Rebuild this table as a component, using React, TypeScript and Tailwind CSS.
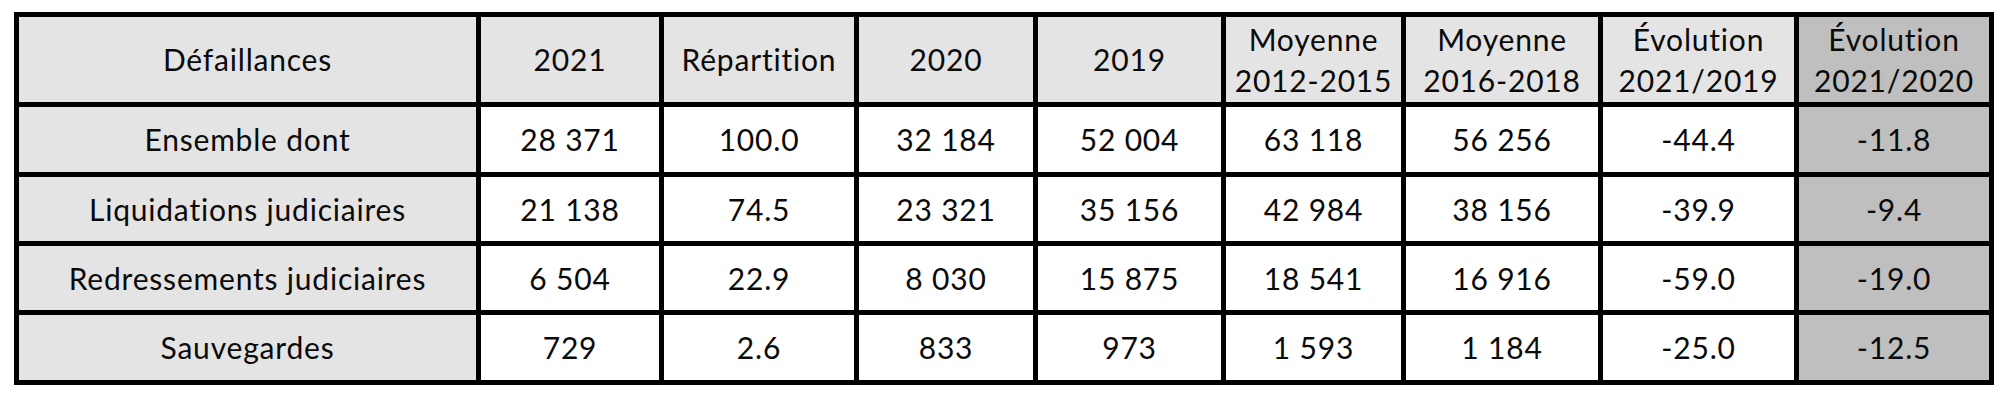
import React from 'react';

interface Row {
  label: string;
  values: string[];
  evolution: string;
}

const headers = [
  'Défaillances',
  '2021',
  'Répartition',
  '2020',
  '2019',
  'Moyenne\n2012-2015',
  'Moyenne\n2016-2018',
  'Évolution\n2021/2019',
];

const rows: Row[] = [
  {
    label: 'Ensemble dont',
    values: ['28 371', '100.0', '32 184', '52 004', '63 118', '56 256', '-44.4'],
    evolution: '-11.8',
  },
  {
    label: 'Liquidations judiciaires',
    values: ['21 138', '74.5', '23 321', '35 156', '42 984', '38 156', '-39.9'],
    evolution: '-9.4',
  },
  {
    label: 'Redressements judiciaires',
    values: ['6 504', '22.9', '8 030', '15 875', '18 541', '16 916', '-59.0'],
    evolution: '-19.0',
  },
  {
    label: 'Sauvegardes',
    values: ['729', '2.6', '833', '973', '1 593', '1 184', '-25.0'],
    evolution: '-12.5',
  },
];

function Cell({ children, tone }: { children: React.ReactNode; tone: 'light' | 'white' | 'dark' }) {
  const bg =
    tone === 'light' ? 'bg-[#e4e4e4]' : tone === 'dark' ? 'bg-[#bfbfbf]' : 'bg-white';
  return (
    <div
      className={`${bg} flex items-center justify-center text-center whitespace-pre-line leading-[41px]`}
    >
      {children}
    </div>
  );
}

export default function App() {
  return (
    <div className="bg-white w-[2016px] h-[400px] pt-[12px] pl-[14px] font-['Lato',sans-serif] text-[30px] tracking-[0.8px] text-[#0a0a0a]">
      <div className="w-[1980px] bg-black p-[5px] gap-[5px] grid grid-cols-[457px_178px_190px_174px_183px_175px_192px_191px_190px] grid-rows-[85px_65px_64px_64px_65px]">
        {headers.map((h) => (
          <Cell key={h} tone="light">
            {h}
          </Cell>
        ))}
        <Cell tone="dark">{'Évolution\n2021/2020'}</Cell>

        {rows.map((r) => (
          <React.Fragment key={r.label}>
            <Cell tone="light">{r.label}</Cell>
            {r.values.map((v, i) => (
              <Cell key={i} tone="white">
                {v}
              </Cell>
            ))}
            <Cell tone="dark">{r.evolution}</Cell>
          </React.Fragment>
        ))}
      </div>
    </div>
  );
}
